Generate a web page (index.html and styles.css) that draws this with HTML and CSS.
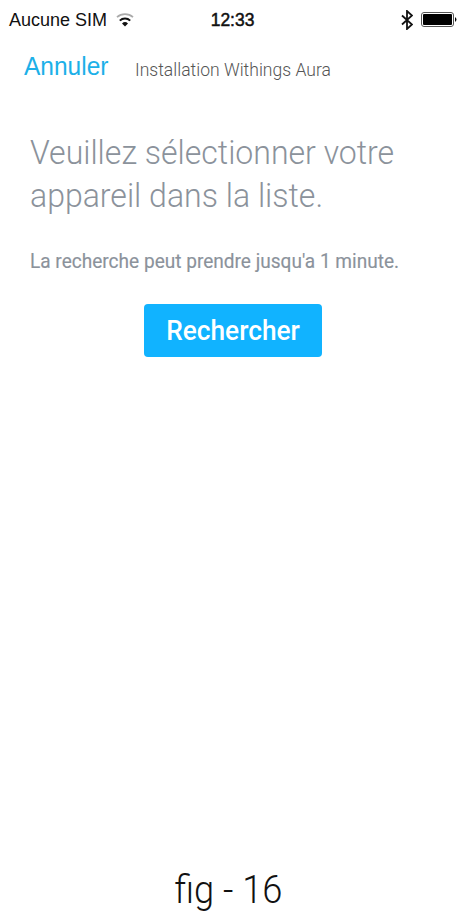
FILE: index.html
```html
<!DOCTYPE html>
<html lang="fr"><head><meta charset="utf-8"><title>Installation Withings Aura</title><link rel="stylesheet" href="styles.css"></head>
<body>
<header class="status"><span class="carrier">Aucune SIM</span>
<svg class="wifi" viewBox="0 0 18 14"><path d="M1 4.2a12 12 0 0 1 16 0" fill="none" stroke="#aaa" stroke-width="1.8"/><path d="M3.8 7.6a7.5 7.5 0 0 1 10.4 0" fill="none" stroke="#111" stroke-width="2"/><path d="M9 13.5L6 10.4a4.3 4.3 0 0 1 6 0z" fill="#111"/></svg>
<time class="clock">12:33</time>
<svg class="bt" viewBox="0 0 12 20"><path d="M1 5.5l10 9L6 19V1l5 4.5-10 9" fill="none" stroke="#111" stroke-width="1.8"/></svg>
<svg class="battery" viewBox="0 0 37 16"><rect x=".5" y=".5" width="32" height="14" rx="2.5" fill="#fff" stroke="#555"/><rect x="2" y="2" width="29" height="11" rx="1"/><path d="M34 5q3 2.5 0 5z"/></svg>
</header>
<nav class="nav"><a class="cancel">Annuler</a><span class="title">Installation Withings Aura</span></nav>
<main class="content"><h1 class="heading"><span class="line">Veuillez sélectionner votre</span><span class="line">appareil dans la liste.</span></h1>
<p class="hint">La recherche peut prendre jusqu'a 1 minute.</p>
<button class="search"><span class="label">Rechercher</span></button></main>
<footer class="caption">fig - 16</footer>
</body></html>
```
FILE: styles.css
```css
body{margin:0;height:914px;background:#fff;display:flex;flex-direction:column;font-family:Roboto,sans-serif;overflow:hidden}
.status{display:flex;height:40px;align-items:center;font:18px/40px "Liberation Sans",sans-serif;color:#111;padding-left:9px}
.carrier{width:98px;white-space:nowrap}
.wifi{width:18px;height:14px;margin-left:9px}
.clock{font-weight:400;-webkit-text-stroke:.5px #111;margin-left:76px;width:45px;transform:scaleX(.97)}
.bt{width:12px;height:20px;margin-left:146px}
.battery{width:37px;height:16px;margin-left:8px}
.nav{display:flex;height:52px;padding-left:24px;align-items:center}
.cancel{font:25px/52px "Liberation Sans",sans-serif;color:#1cb0e8;width:111px;transform:scaleX(.98);transform-origin:left}
.title{font-size:18px;font-weight:300;color:#555;padding-top:7px;white-space:nowrap;transform:scaleX(.975);transform-origin:left}
.content{padding:39px 30px 0}
.heading{margin:0;font-size:34px;line-height:43px;font-weight:300;color:#8b929b;transform:scaleX(.942);transform-origin:left}
.line{display:block;white-space:nowrap}
.hint{margin:32px 0 0;font-size:20px;line-height:24px;color:#8b929b;white-space:nowrap;font-weight:400;-webkit-text-stroke:.15px #8b929b;transform:scaleX(.953);transform-origin:left}
.search{display:block;margin:31px 0 0 114px;width:178px;height:53px;border:0;border-radius:4px;background:#11b3ff;color:#fff;font:500 27px Roboto,sans-serif;padding:0}
.label{display:block;padding-top:1px;transform:scaleX(.973)}
.caption{margin-top:auto;font-size:39px;line-height:48px;font-weight:300;text-align:center;color:#111;transform:translateX(-2.5px) scaleX(.93)}
```
